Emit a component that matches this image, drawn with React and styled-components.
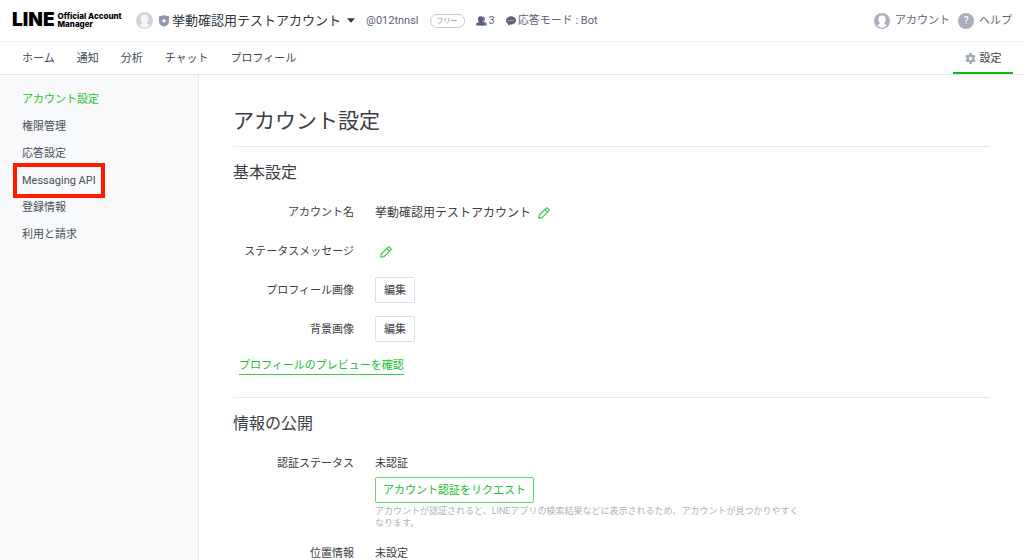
import React, { useState } from 'react'
import styled, { createGlobalStyle } from 'styled-components'

const navItems = ['ホーム', '通知', '分析', 'チャット', 'プロフィール']

const menuItems = ['アカウント設定', '権限管理', '応答設定', 'Messaging API', '登録情報', '利用と請求']

const AvatarIcon = ({ size, bg, fg }) => (
  <svg width={size} height={size} viewBox="0 0 16 16" aria-hidden="true">
    <circle cx="8" cy="8" r="8" fill={bg} />
    <path
      d="M8 2.600c-2.300 0-3.700 1.500-3.700 3.700 0 1.400.5 2.600 1.400 3.400v1.400c-.9.200-1.800.6-2.500 1.200A8 8 0 0 0 8 15a8 8 0 0 0 4.800-2.700c-.7-.6-1.600-1-2.500-1.200V9.700c.9-.8 1.400-2 1.400-3.400 0-2.200-1.400-3.700-3.700-3.700z"
      fill={fg}
    />
  </svg>
)

const ShieldIcon = () => (
  <svg width="10" height="12" viewBox="0 0 10 12" aria-hidden="true">
    <path d="M5 .3 10 1.300v5.200C10 9 7.800 10.800 5 11.800 2.200 10.800 0 9 0 6.500V1.300z" fill="#9394ae" />
    <path d="m5 3.500.7 1.400 1.500.2-1.100 1.100.3 1.500L5 7l-1.400.7.3-1.500-1.100-1.100 1.500-.2z" fill="#fff" />
  </svg>
)

const PeopleIcon = () => (
  <svg width="11" height="10" viewBox="0 0 11 10" aria-hidden="true">
    <path d="M6.800.4c1.500 0 2.300 1.100 2.300 2.600 0 .9-.3 1.700-.8 2.200v.7c1.500.4 2.600.9 2.600 2v1.600H5V.9c.5-.3 1.100-.5 1.800-.5z" fill="#7c849c" />
    <path d="M4.400.3c1.600 0 2.500 1.200 2.500 2.800 0 1-.4 1.900-.9 2.400v.8c1.500.4 2.500 1 2.500 2.100v1.200H.2V8.400c0-1.100 1-1.700 2.600-2.100v-.8c-.5-.5-.9-1.400-.9-2.400C1.900 1.500 2.800.3 4.400.3z" fill="#565e7c" />
  </svg>
)

const ChatIcon = () => (
  <svg width="10" height="10" viewBox="0 0 10 10" aria-hidden="true">
    <path d="M5 .3C2.200.3 0 2.200 0 4.500c0 1.500.8 2.700 2.100 3.400v1.900l2.100-1.300H5c2.800 0 5-1.700 5-4S7.800.3 5 .3z" fill="#5c6480" />
    <circle cx="2.900" cy="4.500" r=".5" fill="#fff" />
    <circle cx="5" cy="4.500" r=".5" fill="#fff" />
    <circle cx="7.100" cy="4.500" r=".5" fill="#fff" />
  </svg>
)

const CaretIcon = () => (
  <svg width="8" height="5" viewBox="0 0 8 5" aria-hidden="true">
    <path d="M0 .2h8L4 4.800z" fill="#303740" />
  </svg>
)

const GearIcon = () => (
  <svg width="11" height="11" viewBox="0 0 20 20" aria-hidden="true">
    <path
      fill="#a3abb6"
      fillRule="evenodd"
      d="M8 0h4l.6 3 1.800 1 2.900-1 2 3.500L17.100 8.600v2.800l2.200 2.100-2 3.500-2.900-1-1.800 1-.6 3H8l-.6-3-1.800-1-2.900 1-2-3.500 2.200-2.100V8.600L.7 6.500l2-3.500 2.900 1 1.800-1zM10 7a3 3 0 1 0 0 6 3 3 0 0 0 0-6z"
    />
  </svg>
)

const PencilIcon = () => (
  <svg width="12" height="12" viewBox="0 0 12 12" fill="none" stroke="#35cf45" strokeWidth="1.200" strokeLinejoin="round" aria-hidden="true">
    <path d="M.8 11.200 1.300 8 7.900 1.300q.8-.8 1.600 0l1.200 1.200q.8.8 0 1.600L4.100 10.700z" />
    <path d="m6.800 2.500 2.700 2.700" />
  </svg>
)

const App = () => {
  const [current, setCurrent] = useState('アカウント設定')

  return (
    <>
      <GlobalStyle />
      <Header>
        <Logo href="#home">
          <LogoMark>LINE</LogoMark>
          <LogoText>Official Account<br />Manager</LogoText>
        </Logo>
        <AccountButton type="button">
          <AvatarIcon size={17} bg="#d0d4dc" fg="#f6f7f9" />
          <AccountName><ShieldIcon />挙動確認用テストアカウント</AccountName>
          <CaretIcon />
        </AccountButton>
        <AccountInfo>
          <span>@012tnnsl</span>
          <Plan>フリー</Plan>
          <Stat><PeopleIcon />3</Stat>
          <Stat><ChatIcon />応答モード : Bot</Stat>
        </AccountInfo>
        <HeaderLinks>
          <HeaderLink href="#account">
            <AvatarIcon size={16} bg="#a8b0bb" fg="#fff" />
            アカウント
          </HeaderLink>
          <HeaderLink href="#help">
            <HelpMark>?</HelpMark>
            ヘルプ
          </HeaderLink>
        </HeaderLinks>
      </Header>

      <Nav>
        <NavList>
          {navItems.map((item) => <NavLink key={item} href="#nav">{item}</NavLink>)}
        </NavList>
        <SettingTab href="#settings"><GearIcon />設定</SettingTab>
      </Nav>

      <Body>
        <Sidebar>
          {menuItems.map((item) => (
            <MenuLink
              key={item}
              href="#menu"
              $active={item === current}
              $marked={item === 'Messaging API'}
              onClick={() => setCurrent(item)}
            >
              {item}
            </MenuLink>
          ))}
        </Sidebar>

        <Main>
          <Title>アカウント設定</Title>

          <Section>
            <Heading>基本設定</Heading>
            <Rows>
              <Row>
                <dt>アカウント名</dt>
                <dd>
                  <NameValue>
                    挙動確認用テストアカウント
                    <IconButton type="button" aria-label="アカウント名を編集"><PencilIcon /></IconButton>
                  </NameValue>
                </dd>
              </Row>
              <Row>
                <dt>ステータスメッセージ</dt>
                <dd>
                  <IconButton type="button" aria-label="ステータスメッセージを編集"><PencilIcon /></IconButton>
                </dd>
              </Row>
              <Row>
                <dt>プロフィール画像</dt>
                <dd><Button type="button">編集</Button></dd>
              </Row>
              <Row>
                <dt>背景画像</dt>
                <dd><Button type="button">編集</Button></dd>
              </Row>
            </Rows>
            <PreviewLink href="#preview">プロフィールのプレビューを確認</PreviewLink>
          </Section>

          <Section>
            <Heading>情報の公開</Heading>
            <Rows>
              <Row>
                <dt>認証ステータス</dt>
                <dd>
                  未認証
                  <Button type="button" $primary>アカウント認証をリクエスト</Button>
                  <Note>アカウントが認証されると、LINEアプリの検索結果などに表示されるため、アカウントが見つかりやすくなります。</Note>
                </dd>
              </Row>
              <Row>
                <dt>位置情報</dt>
                <dd>未設定</dd>
              </Row>
            </Rows>
          </Section>
        </Main>
      </Body>
    </>
  )
}

const GlobalStyle = createGlobalStyle`
  * {
    box-sizing: border-box;
  }

  html {
    scrollbar-width: none;
  }

  body {
    margin: 0;
    background: #fff;
    color: #3b4045;
    font-family: Roboto, 'Noto Sans CJK JP', sans-serif;
    font-size: 11px;
    line-height: 16px;
  }

  #root {
    display: flex;
    flex-direction: column;
    min-height: 100vh;
  }

  a {
    color: inherit;
    text-decoration: none;
  }

  button {
    font: inherit;
    color: inherit;
    cursor: pointer;
  }

  svg {
    display: block;
    flex: none;
  }
`

const Header = styled.header`
  display: flex;
  align-items: center;
  height: 42px;
  padding: 0 12px;
  border-bottom: 1px solid #efeff2;
  white-space: nowrap;
`

const Logo = styled.a`
  display: flex;
  align-items: center;
  gap: 3px;
  width: 124px;
  padding-bottom: 1px;
  color: #000;
`

const LogoMark = styled.span`
  font-family: Inter, sans-serif;
  font-size: 19px;
  font-weight: 900;
  line-height: 18px;
`

const LogoText = styled.span`
  font-family: Inter, sans-serif;
  font-size: 8px;
  font-weight: 800;
  line-height: 8px;
`

const AccountButton = styled.button`
  display: flex;
  align-items: center;
  gap: 6px;
  padding: 0;
  border: none;
  background: none;
  color: #303740;
`

const AccountName = styled.span`
  display: flex;
  align-items: center;
  gap: 3px;
  font-size: 13px;
`

const AccountInfo = styled.div`
  display: flex;
  align-items: center;
  gap: 11px;
  margin-left: 11px;
  color: #5c6480;
`

const Plan = styled.span`
  padding: 0 6px;
  border: 1px solid #c3c8d2;
  border-radius: 7px;
  color: #8d95a5;
  font-size: 7px;
  line-height: 12px;
`

const Stat = styled.span`
  display: flex;
  align-items: center;
  gap: 2px;
`

const HeaderLinks = styled.div`
  display: flex;
  gap: 8px;
  margin-left: auto;
  color: #5f6878;
`

const HeaderLink = styled.a`
  display: flex;
  align-items: center;
  gap: 5px;
`

const HelpMark = styled.span`
  width: 16px;
  border-radius: 50%;
  background: #a8b0bb;
  color: #fff;
  font-size: 11px;
  text-align: center;
`

const Nav = styled.nav`
  display: flex;
  justify-content: space-between;
  height: 33px;
  padding: 0 11px 0 22px;
  border-bottom: 1px solid #e4e5e9;
`

const NavList = styled.div`
  display: flex;
  align-items: center;
  gap: 22px;
  padding-top: 2px;
`

const NavLink = styled.a`
  color: #434b57;
`

const SettingTab = styled.a`
  display: flex;
  align-items: center;
  justify-content: center;
  gap: 4px;
  width: 60px;
  padding-top: 3px;
  border-bottom: 2px solid #0abf15;
`

const Body = styled.div`
  display: flex;
  flex: 1;
`

const Sidebar = styled.aside`
  display: flex;
  flex-direction: column;
  align-items: flex-start;
  gap: 11px;
  flex: none;
  width: 199px;
  padding: 17px 22px;
  border-right: 1px solid #e6e8ee;
  background: #f7f9fb;
`

const MenuLink = styled.a`
  position: relative;
  color: ${({ $active }) => ($active ? '#1fc72f' : '#4a4f57')};

  &::after {
    content: '';
    display: ${({ $marked }) => ($marked ? 'block' : 'none')};
    position: absolute;
    inset: -10px -9px -9px;
    border: 4px solid #ff1a00;
    pointer-events: none;
  }
`

const Main = styled.main`
  flex: 1;
  min-width: 0;
  padding: 30px 34px 0;
`

const Title = styled.h1`
  margin: 0;
  padding-bottom: 9px;
  font-size: 21px;
  font-weight: 400;
  line-height: 32px;
`

const Section = styled.section`
  padding: 14px 0 22px;
  border-top: 1px solid #e8e9ec;

  &:last-child {
    padding-bottom: 0;
  }
`

const Heading = styled.h2`
  margin: 0 0 14px;
  font-size: 16px;
  font-weight: 400;
  line-height: 24px;
`

const Rows = styled.dl`
  display: grid;
  gap: 11px;
  margin: 0;
`

const Row = styled.div`
  display: grid;
  grid-template-columns: 121px 1fr;
  gap: 21px;
  min-height: 28px;
  line-height: 28px;

  dt {
    text-align: right;
  }

  dd {
    margin: 0;
  }
`

const NameValue = styled.span`
  display: flex;
  align-items: center;
  gap: 2px;
  font-size: 12px;
`

const IconButton = styled.button`
  display: flex;
  align-items: center;
  height: 28px;
  padding: 0 5px;
  border: none;
  background: none;
`

const Button = styled.button`
  display: block;
  height: 26px;
  margin: ${({ $primary }) => ($primary ? '-1px 0 0' : '0')};
  padding: 1px ${({ $primary }) => ($primary ? '7px' : '8px')} 0;
  border: 1px solid ${({ $primary }) => ($primary ? '#5bdc67' : '#dcdfe6')};
  border-radius: 2px;
  background: #fff;
  color: ${({ $primary }) => ($primary ? '#17c229' : 'inherit')};
  line-height: 23px;
`

const Note = styled.p`
  max-width: 432px;
  margin: 2px 0 0;
  color: #aab3bd;
  font-size: 9px;
  line-height: 12px;
`

const PreviewLink = styled.a`
  display: inline-block;
  vertical-align: top;
  margin: 14px 0 0 6px;
  border-bottom: 1px solid #35d145;
  color: #17c229;
`

export default App
